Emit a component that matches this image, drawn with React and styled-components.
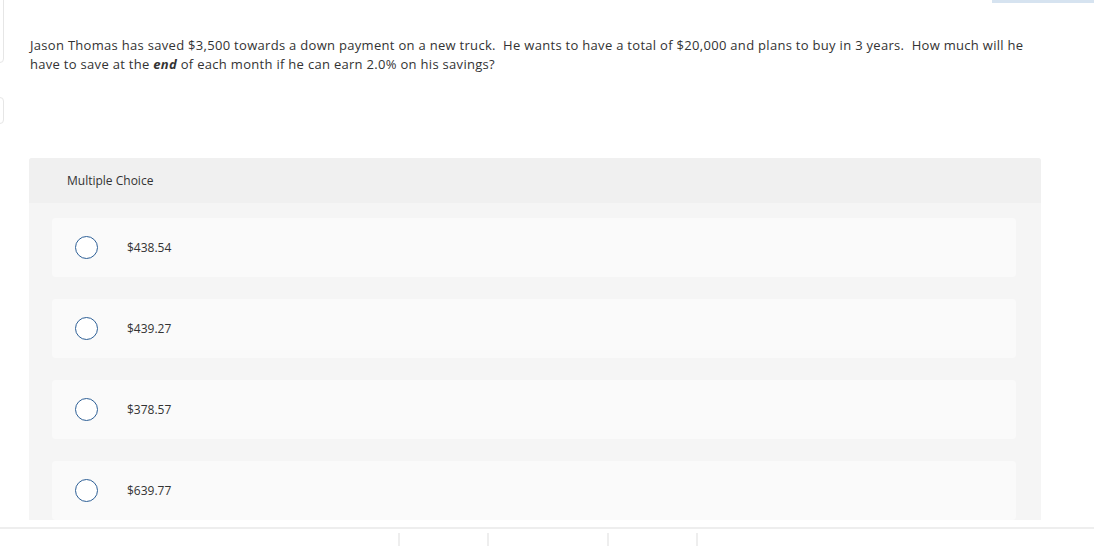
import React from "react";
import styled, { createGlobalStyle } from "styled-components";

const Global = createGlobalStyle`
  html, body { margin: 0; padding: 0; background: #fff; }
  body { font-family: "Open Sans", Lato, "Liberation Sans", sans-serif; color: #333; }
`;

const Page = styled.div`
  position: relative;
  width: 1094px;
  height: 546px;
  overflow: hidden;
  background: #fff;
`;

const TopAccent = styled.div`
  position: absolute;
  top: 0;
  right: 0;
  width: 102px;
  height: 3px;
  background: #d6e3f0;
`;

const SideTab = styled.div`
  position: absolute;
  left: -10px;
  top: ${(p) => p.$top}px;
  width: 12px;
  height: ${(p) => p.$h}px;
  border: 1px solid #e6e6e6;
  border-radius: 4px;
  background: #fff;
`;

const Main = styled.div`
  padding: 36px 53px 0 29px;
  height: 521px;
  box-sizing: border-box;
  overflow: hidden;
`;

const Question = styled.p`
  margin: 0 0 0 1px;
  font-size: 13px;
  line-height: 19px;
  letter-spacing: 0.3px;
  color: #333;
  em { font-weight: 700; font-style: italic; }
`;

const Panel = styled.section`
  margin-top: 84px;
  background: #f5f5f5;
  border-radius: 3px 3px 0 0;
  overflow: hidden;
`;

const PanelHeader = styled.div`
  height: 45px;
  display: flex;
  align-items: center;
  padding-left: 38px;
  background: #f0f0f0;
  font-size: 12px;
  color: #333;
`;

const Options = styled.div`
  display: flex;
  flex-direction: column;
  gap: 22px;
  padding: 15px 25px 0 23px;
`;

const Option = styled.label`
  display: flex;
  align-items: center;
  height: 59px;
  padding-left: 23px;
  background: #fafafa;
  border-radius: 4px;
  font-size: 12px;
  color: #333;
  cursor: pointer;
`;

const Radio = styled.span`
  width: 21px;
  height: 21px;
  border: 1.5px solid #2d5f96;
  border-radius: 50%;
  background: #fff;
  flex: none;
  margin-right: 29px;
`;

const Footer = styled.div`
  margin-top: 6px;
  border-top: 2px solid #eeeeee;
  padding: 4px 0 0 398px;
  display: flex;
  height: 40px;
`;

const Cell = styled.div`
  width: ${(p) => p.$w}px;
  border-left: 2px solid #eeeeee;
`;

const choices = ["$438.54", "$439.27", "$378.57", "$639.77"];

export default function App() {
  return (
    <Page>
      <Global />
      <TopAccent />
      <SideTab $top={-5} $h={66} />
      <SideTab $top={97} $h={25} />
      <Main>
        <Question>
          Jason Thomas has saved $3,500 towards a down payment on a new truck.&nbsp; He wants to have a total of $20,000 and plans to buy in 3 years.&nbsp; How much will he have to save at the <em>end</em> of each month if he can earn 2.0% on his savings?
        </Question>
        <Panel>
          <PanelHeader>Multiple Choice</PanelHeader>
          <Options>
            {choices.map((c) => (
              <Option key={c}>
                <Radio />
                {c}
              </Option>
            ))}
          </Options>
        </Panel>
      </Main>
      <Footer>
        <Cell $w={87} />
        <Cell $w={118} />
        <Cell $w={87} />
        <Cell $w={100} />
      </Footer>
    </Page>
  );
}
